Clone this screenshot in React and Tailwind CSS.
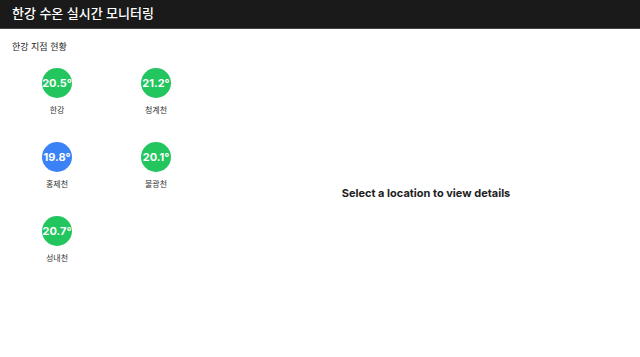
const sites = [
  { name: "한강", temp: "20.5°", color: "bg-[#22c55e]" },
  { name: "청계천", temp: "21.2°", color: "bg-[#22c55e]" },
  { name: "홍제천", temp: "19.8°", color: "bg-[#3b82f6]" },
  { name: "불광천", temp: "20.1°", color: "bg-[#22c55e]" },
  { name: "성내천", temp: "20.7°", color: "bg-[#22c55e]" },
];

const font = { fontFamily: "Inter, 'Noto Sans CJK KR', sans-serif" };

export default function App() {
  return (
    <div className="w-[640px] h-[357px] flex flex-col bg-white text-[#111]" style={font}>
      <div className="h-[29px] shrink-0 bg-[#1a1a1a] text-white flex items-center px-3 border-b border-[#444]">
        <h1 className="text-[13px] font-medium">한강 수온 실시간 모니터링</h1>
      </div>
      <div className="flex flex-1">
        <div className="w-[212px] shrink-0 px-3 pt-[11px]">
          <h2 className="text-[9px] text-[#222] leading-[14px]">한강 지점 현황</h2>
          <div className="grid grid-cols-[90px_90px] gap-x-[9px] gap-y-[26px] mt-[14px]">
            {sites.map((s) => (
              <div key={s.name} className="flex flex-col items-center">
                <div
                  className={`w-[30px] h-[30px] rounded-full ${s.color} text-white flex items-center justify-center text-[11px] font-bold whitespace-nowrap`}
                >
                  {s.temp}
                </div>
                <div className="mt-[6px] text-[8px] leading-[12px] text-[#333]">{s.name}</div>
              </div>
            ))}
          </div>
        </div>
        <div className="flex-1 flex items-center justify-center">
          <p className="text-[11px] font-bold text-[#222]">Select a location to view details</p>
        </div>
      </div>
    </div>
  );
}
